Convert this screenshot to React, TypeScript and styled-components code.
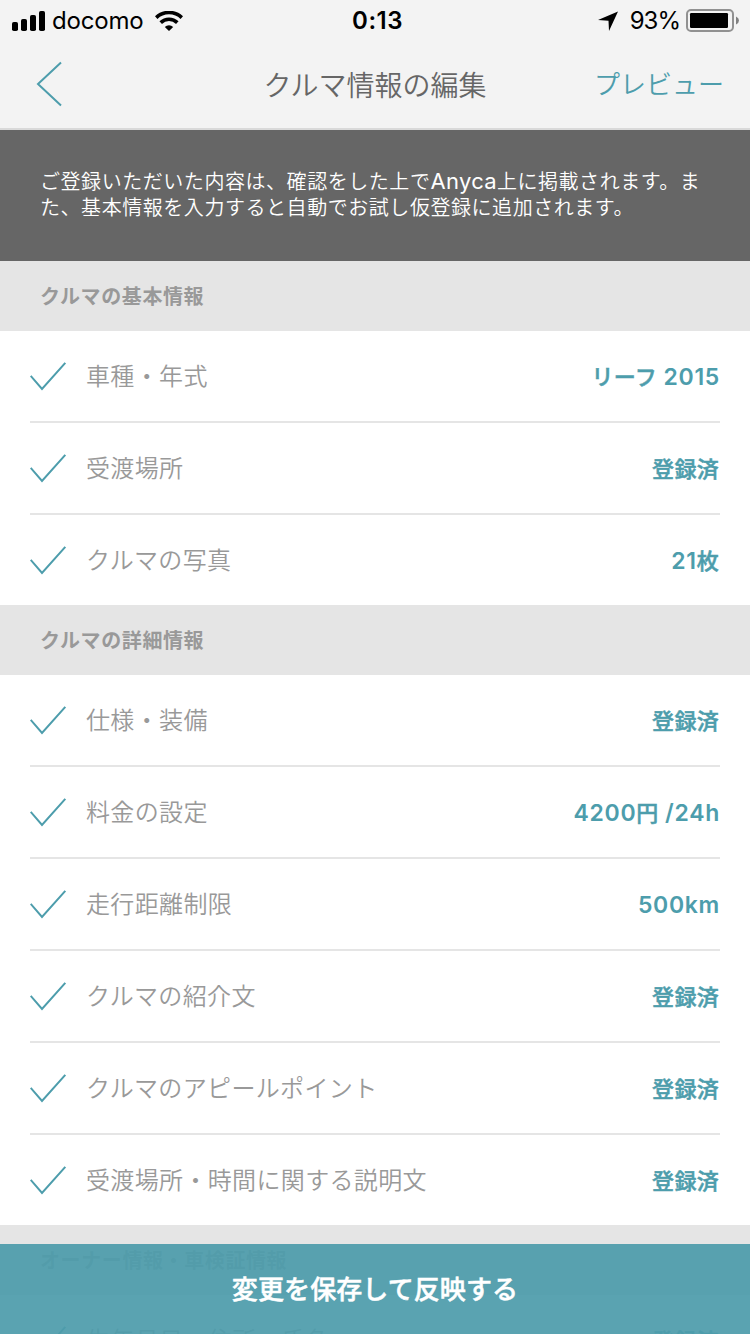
import React from "react";
import styled, { createGlobalStyle } from "styled-components";

const teal = "#4d9dac";

const GlobalStyle = createGlobalStyle`
  *, *::before, *::after { box-sizing: border-box; }
  body {
    margin: 0;
    background: #fff;
    font-family: Inter, "Noto Sans CJK JP", sans-serif;
    overflow: hidden;
  }
`;

const Screen = styled.div`
  position: relative;
  width: 750px;
  height: 1334px;
  overflow: hidden;
  background: #fff;
`;

const TopArea = styled.header`
  height: 130px;
  background: #f3f3f3;
  border-bottom: 2px solid #d9d9d9;
`;

const StatusBar = styled.div`
  display: grid;
  grid-template-columns: 1fr auto 1fr;
  align-items: center;
  height: 40px;
  padding: 0 11px 0 12px;
  color: #000;
  font-size: 24px;
  line-height: 40px;
`;

const StatusGroup = styled.div<{ $end?: boolean }>`
  display: flex;
  align-items: center;
  justify-content: ${(p) => (p.$end ? "flex-end" : "flex-start")};
  height: 40px;
`;

const Carrier = styled.span`
  margin: 1px 12px 0 7px;
  letter-spacing: -0.2px;
`;

const Clock = styled.span`
  padding: 1px 0 0 4px;
  font-weight: 600;
  letter-spacing: 0.5px;
`;

const Percent = styled.span`
  margin: 1px 6px 0 12px;
  letter-spacing: -1px;
`;

const NavBar = styled.nav`
  display: grid;
  grid-template-columns: 1fr auto 1fr;
  align-items: center;
  height: 88px;
  padding: 0 26px;
`;

const Title = styled.h1`
  margin: 0;
  padding-top: 3px;
  color: #666;
  font-size: 28px;
  font-weight: 350;
  line-height: 40px;
`;

const BackButton = styled.button`
  display: flex;
  margin-left: 10px;
  padding: 0;
  border: 0;
  background: none;
`;

const PreviewLink = styled.a`
  justify-self: end;
  padding-top: 2px;
  color: ${teal};
  font-size: 26px;
  font-weight: 350;
  line-height: 40px;
`;

const Notice = styled.p`
  height: 131px;
  margin: 0;
  padding: 39px 40px 0;
  background: #666;
  color: #fff;
  font-size: 20px;
  font-weight: 350;
  line-height: 26px;
  letter-spacing: 0.55px;
  white-space: nowrap;
`;

const ServiceName = styled.span`
  font-size: 22px;
  font-weight: 400;
  line-height: 1;
  letter-spacing: 0.3px;
`;

const SectionTitle = styled.h2`
  height: 70px;
  margin: 0;
  padding: 1px 0 0 40px;
  background: #e5e5e5;
  color: #999;
  font-size: 20px;
  font-weight: 600;
  line-height: 70px;
  letter-spacing: 0.6px;
`;

const List = styled.ul`
  margin: 0;
  padding: 0 30px;
  list-style: none;
`;

const Row = styled.li`
  display: flex;
  align-items: center;
  height: 92px;
  border-bottom: 2px solid #e5e5e5;

  &:last-child {
    height: 90px;
    border-bottom: 0;
  }
`;

const Label = styled.span`
  margin-left: 19px;
  padding-top: 2px;
  color: #999;
  font-size: 24px;
  font-weight: 350;
  line-height: 36px;
  letter-spacing: 0.35px;
`;

const Value = styled.span`
  margin-left: auto;
  padding: 2px 1px 0 0;
  color: ${teal};
  font-size: 22px;
  font-weight: 500;
  line-height: 36px;
  letter-spacing: 0.3px;
  white-space: pre;
  -webkit-text-stroke: 0.5px ${teal};
`;

const Latin = styled.span`
  font-size: 23px;
  font-weight: 600;
  letter-spacing: 0.7px;
  -webkit-text-stroke: 0;

  &:last-child {
    margin-right: -1px;
  }
`;

const SaveButton = styled.button`
  position: absolute;
  left: 0;
  bottom: 0;
  width: 100%;
  height: 90px;
  padding: 2px 0 0;
  border: 0;
  background: rgba(77, 156, 171, 0.93);
  color: #fff;
  font-family: inherit;
  font-size: 26px;
  font-weight: 500;
  line-height: 88px;
  letter-spacing: 0.1px;
  -webkit-text-stroke: 0.5px #fff;
`;

const SignalIcon = () => (
  <svg width="33" height="20" viewBox="0 0 33 20">
    <rect x="0" y="11" width="6" height="9" rx="1.8" />
    <rect x="9" y="8" width="6" height="12" rx="1.8" />
    <rect x="18" y="4" width="6" height="16" rx="1.8" />
    <rect x="27" y="0" width="6" height="20" rx="1.8" />
  </svg>
);

const WifiIcon = () => (
  <svg width="28" height="20" viewBox="0 0 28 20">
    <g fill="none" stroke="#000" strokeWidth="3.6">
      <path d="M1.2 6.6 A18.5 18.5 0 0 1 26.8 6.6" />
      <path d="M5.7 11.6 A11.8 11.8 0 0 1 22.3 11.6" />
    </g>
    <path d="M14 20 L9.8 16 A6.1 6.1 0 0 1 18.2 16 Z" />
  </svg>
);

const LocationIcon = () => (
  <svg width="20" height="20" viewBox="0 0 20 20">
    <path d="M20 0.5 L11 20 L10.5 9.7 L0 9 Z" />
  </svg>
);

const BatteryIcon = () => (
  <svg width="53" height="23" viewBox="0 0 53 23">
    <rect x="1" y="1" width="46" height="21" rx="4" fill="none" stroke="#919191" strokeWidth="2" />
    <rect x="4" y="4" width="38" height="15" rx="1.2" />
    <path d="M50 7.5 Q53 9 53 11.5 Q53 14 50 15.5 Z" fill="#808080" />
  </svg>
);

const BackIcon = () => (
  <svg width="27" height="46" viewBox="0 0 27 46">
    <path d="M25 1.5 L2 23 L25 44.5" fill="none" stroke={teal} strokeWidth="2" />
  </svg>
);

const CheckIcon = () => (
  <svg width="37" height="30" viewBox="0 0 37 30">
    <path d="M0.7 14.9 L12 27.9 L35.3 1.9" fill="none" stroke={teal} strokeWidth="2" />
  </svg>
);

interface Item {
  label: string;
  value: string;
}

const sections: { title: string; items: Item[] }[] = [
  {
    title: "クルマの基本情報",
    items: [
      { label: "車種・年式", value: "リーフ 2015" },
      { label: "受渡場所", value: "登録済" },
      { label: "クルマの写真", value: "21枚" },
    ],
  },
  {
    title: "クルマの詳細情報",
    items: [
      { label: "仕様・装備", value: "登録済" },
      { label: "料金の設定", value: "4200円 /24h" },
      { label: "走行距離制限", value: "500km" },
      { label: "クルマの紹介文", value: "登録済" },
      { label: "クルマのアピールポイント", value: "登録済" },
      { label: "受渡場所・時間に関する説明文", value: "登録済" },
    ],
  },
  {
    title: "オーナー情報・車検証情報",
    items: [{ label: "生年月日・住所・氏名", value: "登録済" }],
  },
];

// Numbers and units are set slightly larger and heavier than the Japanese text.
const MixedText = ({ text }: { text: string }) => (
  <>
    {text
      .split(/([ -~]+)/)
      .filter(Boolean)
      .map((part, i) =>
        /^[ -~]/.test(part) ? <Latin key={i}>{part}</Latin> : <span key={i}>{part}</span>
      )}
  </>
);

export default function App() {
  return (
    <Screen lang="ja">
      <GlobalStyle />
      <TopArea>
        <StatusBar>
          <StatusGroup>
            <SignalIcon />
            <Carrier>docomo</Carrier>
            <WifiIcon />
          </StatusGroup>
          <Clock>0:13</Clock>
          <StatusGroup $end>
            <LocationIcon />
            <Percent>93%</Percent>
            <BatteryIcon />
          </StatusGroup>
        </StatusBar>
        <NavBar>
          <BackButton aria-label="戻る">
            <BackIcon />
          </BackButton>
          <Title>クルマ情報の編集</Title>
          <PreviewLink>プレビュー</PreviewLink>
        </NavBar>
      </TopArea>
      <Notice>
        ご登録いただいた内容は、確認をした上で<ServiceName>Anyca</ServiceName>上に掲載されます。ま
        <br />
        た、基本情報を入力すると自動でお試し仮登録に追加されます。
      </Notice>
      {sections.map((section) => (
        <section key={section.title}>
          <SectionTitle>{section.title}</SectionTitle>
          <List>
            {section.items.map((item) => (
              <Row key={item.label}>
                <CheckIcon />
                <Label>{item.label}</Label>
                <Value>
                  <MixedText text={item.value} />
                </Value>
              </Row>
            ))}
          </List>
        </section>
      ))}
      <SaveButton>変更を保存して反映する</SaveButton>
    </Screen>
  );
}
